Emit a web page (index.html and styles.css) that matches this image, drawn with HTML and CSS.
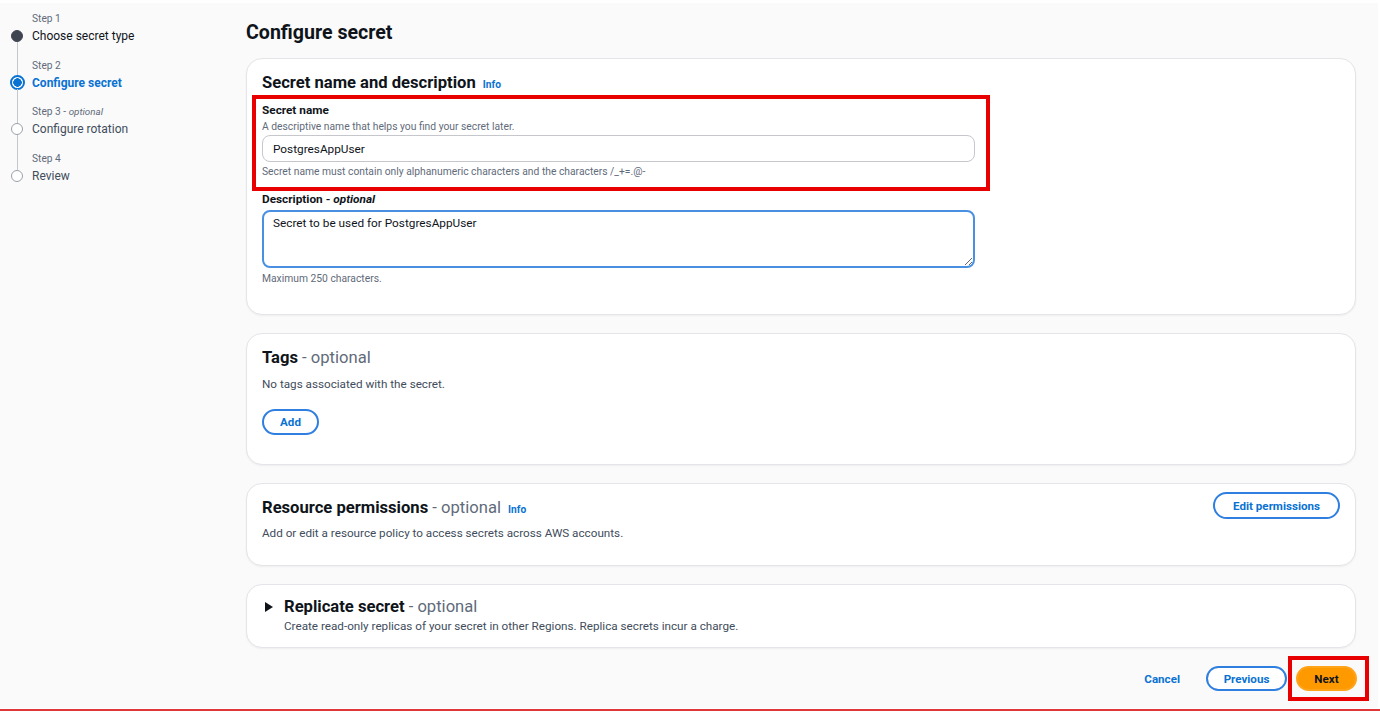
FILE: index.html
```html
<!DOCTYPE html>
<html lang="en">
<head>
    <meta charset="UTF-8">
    <meta name="viewport" content="width=device-width, initial-scale=1.0">
    <title>Configure secret</title>
    <link rel="stylesheet" href="styles.css">
</head>
<body>
    <div class="page">
        <nav class="steps">
            <ol>
                <li class="step done">
                    <span class="rail"><i class="line first"></i><i class="dot"></i><i class="line"></i></span>
                    <div class="step-text">
                        <div class="step-num">Step 1</div>
                        <div class="step-title">Choose secret type</div>
                    </div>
                </li>
                <li class="step current">
                    <span class="rail"><i class="line"></i><i class="dot"></i><i class="line"></i></span>
                    <div class="step-text">
                        <div class="step-num">Step 2</div>
                        <div class="step-title">Configure secret</div>
                    </div>
                </li>
                <li class="step">
                    <span class="rail"><i class="line"></i><i class="dot"></i><i class="line"></i></span>
                    <div class="step-text">
                        <div class="step-num">Step 3 - <i>optional</i></div>
                        <div class="step-title">Configure rotation</div>
                    </div>
                </li>
                <li class="step">
                    <span class="rail"><i class="line"></i><i class="dot"></i><i class="line last"></i></span>
                    <div class="step-text">
                        <div class="step-num">Step 4</div>
                        <div class="step-title">Review</div>
                    </div>
                </li>
            </ol>
        </nav>

        <main class="content">
            <h1>Configure secret</h1>

            <section class="panel name-panel">
                <h2>Secret name and description <a class="info" href="#">Info</a></h2>
                <div class="callout">
                    <label for="secretName">Secret name</label>
                    <div class="hint">A descriptive name that helps you find your secret later.</div>
                    <input type="text" id="secretName" value="PostgresAppUser">
                    <div class="hint constraint">Secret name must contain only alphanumeric characters and the characters /_+=.@-</div>
                </div>
                <div class="field">
                    <label for="description">Description - <i>optional</i></label>
                    <textarea id="description">Secret to be used for PostgresAppUser</textarea>
                    <div class="hint max">Maximum 250 characters.</div>
                </div>
            </section>

            <section class="panel tags-panel">
                <h2>Tags <span class="opt">- optional</span></h2>
                <p class="desc">No tags associated with the secret.</p>
                <button class="btn add">Add</button>
            </section>

            <section class="panel perm-panel">
                <div class="panel-head">
                    <div>
                        <h2>Resource permissions <span class="opt">- optional</span> <a class="info" href="#">Info</a></h2>
                        <p class="desc">Add or edit a resource policy to access secrets across AWS accounts.</p>
                    </div>
                    <button class="btn edit">Edit permissions</button>
                </div>
            </section>

            <section class="panel replica-panel">
                <div class="expander">
                    <span class="caret"></span>
                    <div>
                        <h2>Replicate secret <span class="opt">- optional</span></h2>
                        <p class="desc">Create read-only replicas of your secret in other Regions. Replica secrets incur a charge.</p>
                    </div>
                </div>
            </section>

            <div class="actions">
                <a class="cancel" href="#">Cancel</a>
                <button class="btn previous">Previous</button>
                <div class="next-mark">
                    <button class="btn next">Next</button>
                </div>
            </div>
        </main>
    </div>
    <div class="bottom-rule"></div>
</body>
</html>
```

FILE: styles.css
```css
body {
    margin: 0;
    background: #fff;
    font-family: Roboto, 'Liberation Sans', Arial, sans-serif;
    color: #0f141a;
}
.page {
    margin-top: 3px;
    width: 1378px;
    height: 705px;
    background: #fafafa;
    display: flex;
}
.bottom-rule {
    margin-top: 1px;
    height: 2px;
    background: #e0353b;
}

/* stepper */
.steps {
    width: 246px;
    flex: none;
    padding-top: 8px;
}
.steps ol {
    list-style: none;
    margin: 0;
    padding: 0 0 0 11px;
}
.step {
    display: flex;
    gap: 9px;
    height: 46.7px;
}
.rail {
    width: 12px;
    display: flex;
    flex-direction: column;
    align-items: center;
}
.rail .line {
    width: 1px;
    background: #c6c6cd;
}
.rail .line:first-child {
    height: 19px;
    flex: none;
}
.rail .line:last-child {
    flex: 1;
}
.rail .line.first,
.rail .line.last {
    background: transparent;
}
.dot {
    width: 12px;
    height: 12px;
    border-radius: 50%;
    box-sizing: border-box;
    border: 1.5px solid #9ba1ab;
    background: #fff;
    flex: none;
}
.step.done .dot {
    background: #3f4652;
    border-color: #3f4652;
}
.step.current .dot {
    width: 15px;
    height: 15px;
    margin: -1.5px 0;
    border: 2px solid #0972d3;
    background: radial-gradient(circle, #0972d3 0 4px, #fff 4.5px);
}
.step-num {
    font-size: 10.2px;
    line-height: 16px;
    color: #5f6b7a;
}
.step-num i {
    font-size: 9.8px;
}
.step-title {
    font-size: 12px;
    line-height: 18px;
    color: #414d5c;
}
.step.done .step-title {
    color: #0f141a;
}
.step.current .step-title {
    color: #0972d3;
    font-weight: bold;
}

/* main column */
.content {
    width: 1110px;
    flex: none;
}
h1 {
    margin: 18px 0 13px;
    font-size: 19.6px;
    line-height: 24px;
    font-weight: bold;
}
.panel {
    background: #fff;
    border: 1px solid #e4e5e8;
    border-radius: 16px;
    box-shadow: 0 1px 2px rgba(0, 7, 22, 0.05);
    padding: 14px 15px 0;
    margin-bottom: 18px;
    box-sizing: border-box;
}
h2 {
    margin: 0;
    font-size: 16.6px;
    line-height: 20px;
    font-weight: bold;
}
.opt {
    font-weight: normal;
    color: #5f6b7a;
}
.info {
    font-size: 10.2px;
    font-weight: bold;
    color: #0972d3;
    text-decoration: none;
    margin-left: 3px;
}
.desc {
    margin: 0;
    font-size: 11.7px;
    line-height: 15px;
    color: #414d5c;
}
label {
    display: block;
    font-size: 11.8px;
    line-height: 15px;
    font-weight: bold;
}
label i {
    font-weight: bold;
}
.hint {
    font-size: 10.3px;
    line-height: 13px;
    color: #5f6b7a;
}

/* secret name panel */
.name-panel {
    height: 257px;
}
.callout {
    margin: 0 0 0 -10px;
    width: 738px;
    box-sizing: border-box;
    border: 4px solid #e80000;
    padding: 4px 0 9px 6px;
}
.callout .hint {
    margin-top: 2px;
}
input {
    display: block;
    margin-top: 2px;
    width: 713px;
    height: 27px;
    box-sizing: border-box;
    border: 1px solid #c6c6cd;
    border-radius: 8px;
    padding: 0 10px;
    font-family: inherit;
    font-size: 11.8px;
    color: #0f141a;
}
.callout .constraint {
    margin-top: 3px;
}
.field {
    margin-top: 1px;
}
textarea {
    display: block;
    margin-top: 3px;
    width: 713px;
    height: 58px;
    box-sizing: border-box;
    border: 2px solid #4a90e2;
    border-radius: 8px;
    padding: 4px 9px;
    font-family: inherit;
    font-size: 11.8px;
    line-height: 15px;
    color: #0f141a;
    resize: vertical;
}
.field .max {
    margin-top: 4px;
}

/* tags panel */
.tags-panel {
    height: 132px;
}
.tags-panel .desc {
    margin-top: 9px;
}
.btn {
    font-family: inherit;
    font-size: 11.6px;
    font-weight: bold;
    color: #0972d3;
    background: #fff;
    border: 2px solid #2f7fe0;
    border-radius: 20px;
    cursor: pointer;
    padding: 0;
}
.add {
    margin-top: 17px;
    width: 57px;
    height: 26px;
}

/* permissions panel */
.perm-panel {
    height: 83px;
}
.perm-panel .desc {
    margin-top: 6px;
}
.panel-head {
    display: flex;
    justify-content: space-between;
    align-items: flex-start;
}
.edit {
    margin-top: -6px;
    width: 127px;
    height: 27px;
}

/* replica panel */
.replica-panel {
    height: 64px;
    padding-top: 12px;
    margin-bottom: 8px;
}
.expander {
    display: flex;
    gap: 11px;
}
.caret {
    margin: 5px 0 0 3px;
    width: 0;
    height: 0;
    border-top: 5px solid transparent;
    border-bottom: 5px solid transparent;
    border-left: 8px solid #0f141a;
}
.replica-panel .desc {
    margin-top: 2px;
}

/* footer actions */
.actions {
    display: flex;
    justify-content: flex-end;
    align-items: center;
    height: 45px;
    margin-right: -13px;
}
.cancel {
    font-size: 11.6px;
    font-weight: bold;
    color: #0972d3;
    text-decoration: none;
    margin-right: 26px;
}
.previous {
    width: 81px;
    height: 25px;
    margin-right: 1px;
}
.next-mark {
    border: 4px solid #e80000;
    padding: 6px 8px 6px 4px;
}
.next {
    display: block;
    width: 61px;
    height: 25px;
    background: #ff9900;
    border-color: #ffa31a;
    color: #0f141a;
}
```
